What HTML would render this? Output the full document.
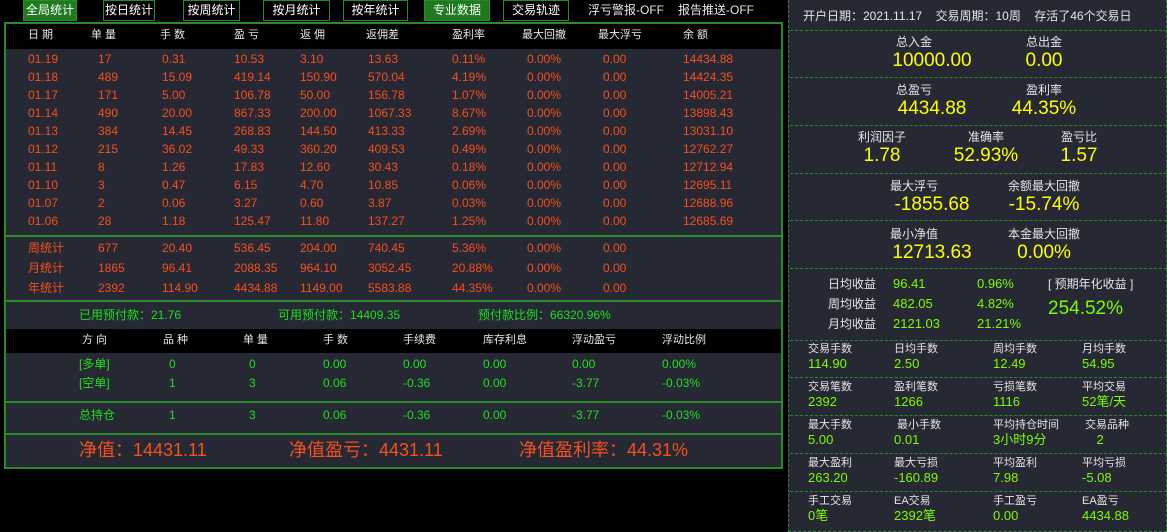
<!DOCTYPE html>
<html><head><meta charset="utf-8"><style>
*{margin:0;padding:0;box-sizing:border-box}
body{width:1167px;height:532px;background:#000;position:relative;overflow:hidden;font-family:"Liberation Sans","Noto Sans CJK SC",sans-serif;font-size:12px;color:#ddd}
.a{position:absolute;white-space:nowrap;line-height:1.15}
.btn{position:absolute;top:0;height:21px;border:1px solid #2a8a2a;color:#fff;font-size:12px;line-height:19px;text-align:center;background:#000}
.btn.on{background:#1f7a1f}
.o{color:#f5501e}
.g{color:#1ee01e}
.y{color:#ffff00}
.lg{color:#7cfc00}
.w{color:#e6e6e6}
.hl{position:absolute;left:4px;width:779px;height:2px;background:#2a8a2a}
.dl{position:absolute;left:790px;width:377px;border-top:1px dashed #2a8a2a}
</style></head><body>
<div class="btn on" style="left:23px;width:54px">全局统计</div>
<div class="btn" style="left:103px;width:52px">按日统计</div>
<div class="btn" style="left:183px;width:57px">按周统计</div>
<div class="btn" style="left:263px;width:67px">按月统计</div>
<div class="btn" style="left:343px;width:65px">按年统计</div>
<div class="btn on" style="left:424px;width:66px">专业数据</div>
<div class="btn" style="left:503px;width:66px">交易轨迹</div>
<div class="a w" style="left:588px;top:4px">浮亏警报-OFF</div>
<div class="a w" style="left:678px;top:4px">报告推送-OFF</div>

<div style="position:absolute;left:4px;top:22px;width:779px;height:447px;border:2px solid #2a8a2a;background:#262833"></div>
<div style="position:absolute;left:6px;top:24px;width:775px;height:25px;background:#000"></div>
<div style="position:absolute;left:6px;top:329px;width:775px;height:24px;background:#000"></div>
<div class="hl" style="top:235px"></div>
<div class="hl" style="top:300px"></div>
<div class="hl" style="top:401px"></div>
<div class="hl" style="top:433px"></div>

<div style="position:absolute;left:788px;top:0;width:379px;height:532px;background:#262833;border-left:1px dashed #2a8a2a;border-right:1px dashed #2a8a2a;border-bottom:1px dashed #2a8a2a"></div>
<div id="L"></div>

<script>
const L=document.getElementById('L');let h='';
function t(x,y,s,c,fs,extra){h+=`<div class="a ${c}" style="left:${x}px;top:${y}px;${fs?'font-size:'+fs+'px;':''}${extra||''}">${s}</div>`}
const cx=[28,98,162,234,300,368,452,527,603,683];
['日 期','单 量','手 数','盈 亏','返 佣','返佣差','盈利率','最大回撤','最大浮亏','余 额'].forEach((s,i)=>t([28,91,160,234,300,366,452,522,598,683][i],29,s,'w',11));
const rows=[["01.19","17","0.31","10.53","3.10","13.63","0.11%","0.00%","0.00","14434.88"],
["01.18","489","15.09","419.14","150.90","570.04","4.19%","0.00%","0.00","14424.35"],
["01.17","171","5.00","106.78","50.00","156.78","1.07%","0.00%","0.00","14005.21"],
["01.14","490","20.00","867.33","200.00","1067.33","8.67%","0.00%","0.00","13898.43"],
["01.13","384","14.45","268.83","144.50","413.33","2.69%","0.00%","0.00","13031.10"],
["01.12","215","36.02","49.33","360.20","409.53","0.49%","0.00%","0.00","12762.27"],
["01.11","8","1.26","17.83","12.60","30.43","0.18%","0.00%","0.00","12712.94"],
["01.10","3","0.47","6.15","4.70","10.85","0.06%","0.00%","0.00","12695.11"],
["01.07","2","0.06","3.27","0.60","3.87","0.03%","0.00%","0.00","12688.96"],
["01.06","28","1.18","125.47","11.80","137.27","1.25%","0.00%","0.00","12685.69"]];
rows.forEach((r,j)=>r.forEach((s,i)=>t(cx[i],53+j*18,s,'o')));
[["周统计","677","20.40","536.45","204.00","740.45","5.36%","0.00%","0.00"],
["月统计","1865","96.41","2088.35","964.10","3052.45","20.88%","0.00%","0.00"],
["年统计","2392","114.90","4434.88","1149.00","5583.88","44.35%","0.00%","0.00"]].forEach((r,j)=>r.forEach((s,i)=>t(cx[i],242+j*20,s,'o')));
t(79,309,'已用预付款：21.76','g');t(278,309,'可用预付款：14409.35','g');t(478,309,'预付款比例：66320.96%','g');
const px=[82,163,243,323,403,483,572,662];
['方 向','品 种','单 量','手 数','手续费','库存利息','浮动盈亏','浮动比例'].forEach((s,i)=>t(px[i],334,s,'w',11));
[["[多单]","0","0","0.00","0.00","0.00","0.00","0.00%"],["[空单]","1","3","0.06","-0.36","0.00","-3.77","-0.03%"]].forEach((r,j)=>r.forEach((s,i)=>t(px[i]+(i==0?-3:(i<3?6:0)),358+j*19,s,'g')));
["总持仓","1","3","0.06","-0.36","0.00","-3.77","-0.03%"].forEach((s,i)=>t(px[i]+(i==0?-3:(i<3?6:0)),409,s,'g'));
t(79,440,'净值：14431.11','o',18);t(289,440,'净值盈亏：4431.11','o',18);t(519,440,'净值盈利率：44.31%','o',18);
// right
t(803,10,'开户日期：2021.11.17&nbsp;&nbsp;&nbsp;&nbsp;交易周期：10周&nbsp;&nbsp;&nbsp;&nbsp;存活了46个交易日','w',12);
[30,77,125,173,220,268,340,377,415,453,491].forEach(y=>h+=`<div class="dl" style="top:${y}px"></div>`);
function c(x,y,s,cl,fs){h+=`<div class="a ${cl}" style="left:${x-100}px;width:200px;text-align:center;top:${y}px;font-size:${fs}px">${s}</div>`}
[[36,'总入金','10000.00','总出金','0.00'],[84,'总盈亏','4434.88','盈利率','44.35%'],[180,'最大浮亏','-1855.68','余额最大回撤','-15.74%'],[228,'最小净值','12713.63','本金最大回撤','0.00%']].forEach(r=>{c(914,r[0],r[1],'w',12);c(932,r[0]+14,r[2],'y',19);c(1044,r[0],r[3],'w',12);c(1044,r[0]+14,r[4],'y',19)});
[[882,'利润因子','1.78'],[986,'准确率','52.93%'],[1079,'盈亏比','1.57']].forEach(r=>{c(r[0],131,r[1],'w',12);c(r[0],145,r[2],'y',19)});
[['日均收益','96.41','0.96%'],['周均收益','482.05','4.82%'],['月均收益','2121.03','21.21%']].forEach((r,j)=>{t(828,278+j*20,r[0],'w',12);t(893,277+j*20,r[1],'lg',13);t(977,277+j*20,r[2],'lg',13)});
t(1048,278,'[ 预期年化收益 ]','w',12);t(1048,298,'254.52%','lg',19);
const qx=[808,894,993,1082];
[[343,['交易手数','114.90'],['日均手数','2.50'],['周均手数','12.49'],['月均手数','54.95']],
[381,['交易笔数','2392'],['盈利笔数','1266'],['亏损笔数','1116'],['平均交易','52笔/天']],
[419,['最大手数','5.00'],['&nbsp;最小手数','0.01'],['平均持仓时间','3小时9分'],['&nbsp;交易品种','&nbsp;&nbsp;&nbsp;&nbsp;2']],
[457,['最大盈利','263.20'],['最大亏损','-160.89'],['平均盈利','7.98'],['平均亏损','-5.08']],
[495,['手工交易','0笔'],['EA交易','2392笔'],['手工盈亏','0.00'],['EA盈亏','4434.88']]].forEach(r=>{for(let i=0;i<4;i++){t(qx[i],r[0],r[i+1][0],'w',11);t(qx[i],r[0]+14,r[i+1][1],'lg',13)}});
L.innerHTML=h;
</script>
</body></html>
